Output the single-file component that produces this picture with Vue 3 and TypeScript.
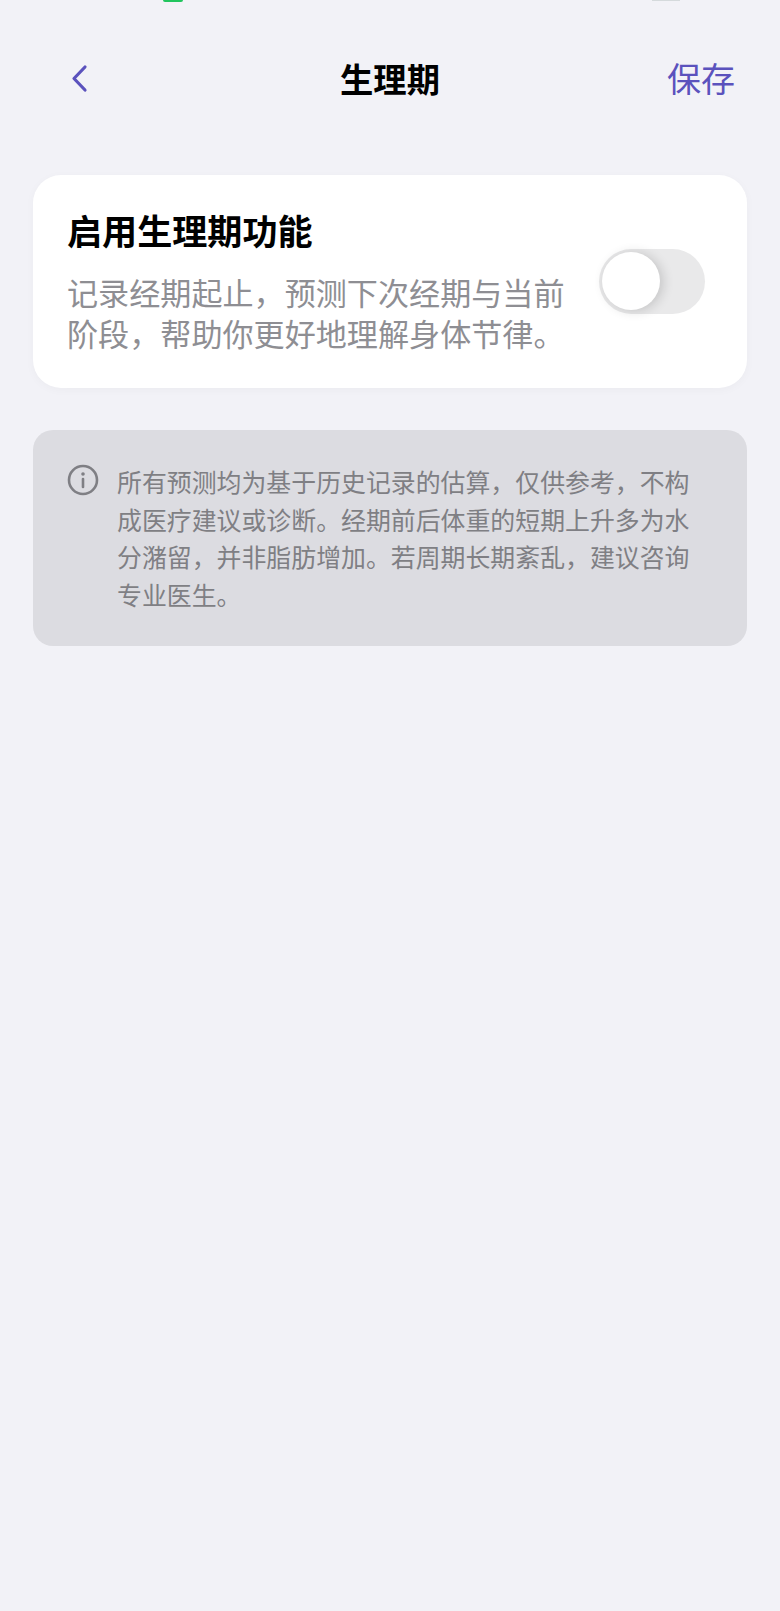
<script setup lang="ts">
const title = '生理期'
const enableTitle = '启用生理期功能'
const enableDesc = '记录经期起止，预测下次经期与当前阶段，帮助你更好地理解身体节律。'
const note =
  '所有预测均为基于历史记录的估算，仅供参考，不构成医疗建议或诊断。经期前后体重的短期上升多为水分潴留，并非脂肪增加。若周期长期紊乱，建议咨询专业医生。'
</script>

<template>
  <div class="page">
    <div class="status">
      <span class="status-green"></span>
      <span class="status-grey"></span>
    </div>

    <header class="nav">
      <button class="back" aria-label="返回">
        <svg width="20" height="30" viewBox="0 0 20 30" fill="none">
          <path d="M16 4 L5 15.5 L16 27" stroke="#5b52bd" stroke-width="3.2" stroke-linecap="round" stroke-linejoin="round" />
        </svg>
      </button>
      <h1 class="title">{{ title }}</h1>
      <button class="save">保存</button>
    </header>

    <section class="card">
      <div class="card-text">
        <h2 class="card-title">{{ enableTitle }}</h2>
        <p class="card-desc">{{ enableDesc }}</p>
      </div>
      <div class="switch"><span class="knob"></span></div>
    </section>

    <section class="note">
      <svg class="note-icon" width="32" height="32" viewBox="0 0 32 32" fill="none">
        <circle cx="16" cy="16" r="14" stroke="#7f7f84" stroke-width="2.6" />
        <circle cx="16" cy="10" r="1.8" fill="#7f7f84" />
        <path d="M16 15 V23" stroke="#7f7f84" stroke-width="2.6" stroke-linecap="round" />
      </svg>
      <p class="note-text">{{ note }}</p>
    </section>
  </div>
</template>

<style>
body {
  margin: 0;
  background: #f2f2f7;
}
</style>

<style scoped>
.page {
  position: relative;
  box-sizing: border-box;
  width: 780px;
  min-height: 1611px;
  padding: 0 33px;
  background: #f2f2f7;
  font-family: "Noto Sans CJK SC", "Liberation Sans", sans-serif;
}

.status {
  position: absolute;
  top: 0;
  left: 0;
  width: 100%;
}

.status-green {
  position: absolute;
  left: 163px;
  top: 0;
  width: 20px;
  height: 2px;
  border-radius: 0 0 4px 4px;
  background: #22c55e;
}

.status-grey {
  position: absolute;
  left: 652px;
  top: 0;
  width: 28px;
  height: 1px;
  background: #d5dadc;
}

.nav {
  display: grid;
  grid-template-columns: 1fr auto 1fr;
  align-items: center;
  height: 64px;
  padding-top: 46px;
}

.back {
  display: flex;
  width: 24px;
  margin-left: 36px;
  padding: 0;
  border: none;
  background: none;
}

.title {
  margin: 0;
  color: #000;
  font-size: 33.3px;
  font-weight: 700;
  line-height: 64px;
}

.save {
  justify-self: end;
  margin-right: 12px;
  padding: 0;
  border: none;
  background: none;
  color: #5b52bd;
  font-family: inherit;
  font-size: 34px;
  line-height: 64px;
}

.card {
  display: flex;
  align-items: center;
  justify-content: space-between;
  box-sizing: border-box;
  height: 213px;
  margin-top: 65px;
  padding: 0 42px 0 34px;
  border-radius: 28px;
  background: #fff;
  box-shadow: 0 2px 10px rgba(0, 0, 0, 0.03);
}

.card-text {
  width: 505px;
  padding-bottom: 4px;
}

.card-title {
  margin: 0 0 18px;
  color: #000;
  font-size: 35.1px;
  font-weight: 700;
  line-height: 46px;
}

.card-desc {
  margin: 0;
  color: #8e8e93;
  font-size: 31.1px;
  line-height: 41px;
}

.switch {
  position: relative;
  flex: none;
  width: 106px;
  height: 65px;
  border-radius: 33px;
  background: #e9e9ea;
}

.knob {
  position: absolute;
  left: 3px;
  top: 3px;
  width: 58px;
  height: 58px;
  border-radius: 50%;
  background: #fff;
  box-shadow: 3px 1px 12px rgba(0, 0, 0, 0.16);
}

.note {
  display: flex;
  gap: 18px;
  box-sizing: border-box;
  height: 216px;
  margin-top: 42px;
  padding: 33px 46px 0 34px;
  border-radius: 20px;
  background: #dcdce1;
}

.note-icon {
  flex: none;
  margin-top: 1px;
}

.note-text {
  margin: 0;
  color: #7f7f84;
  font-size: 24.9px;
  line-height: 37.7px;
}
</style>
